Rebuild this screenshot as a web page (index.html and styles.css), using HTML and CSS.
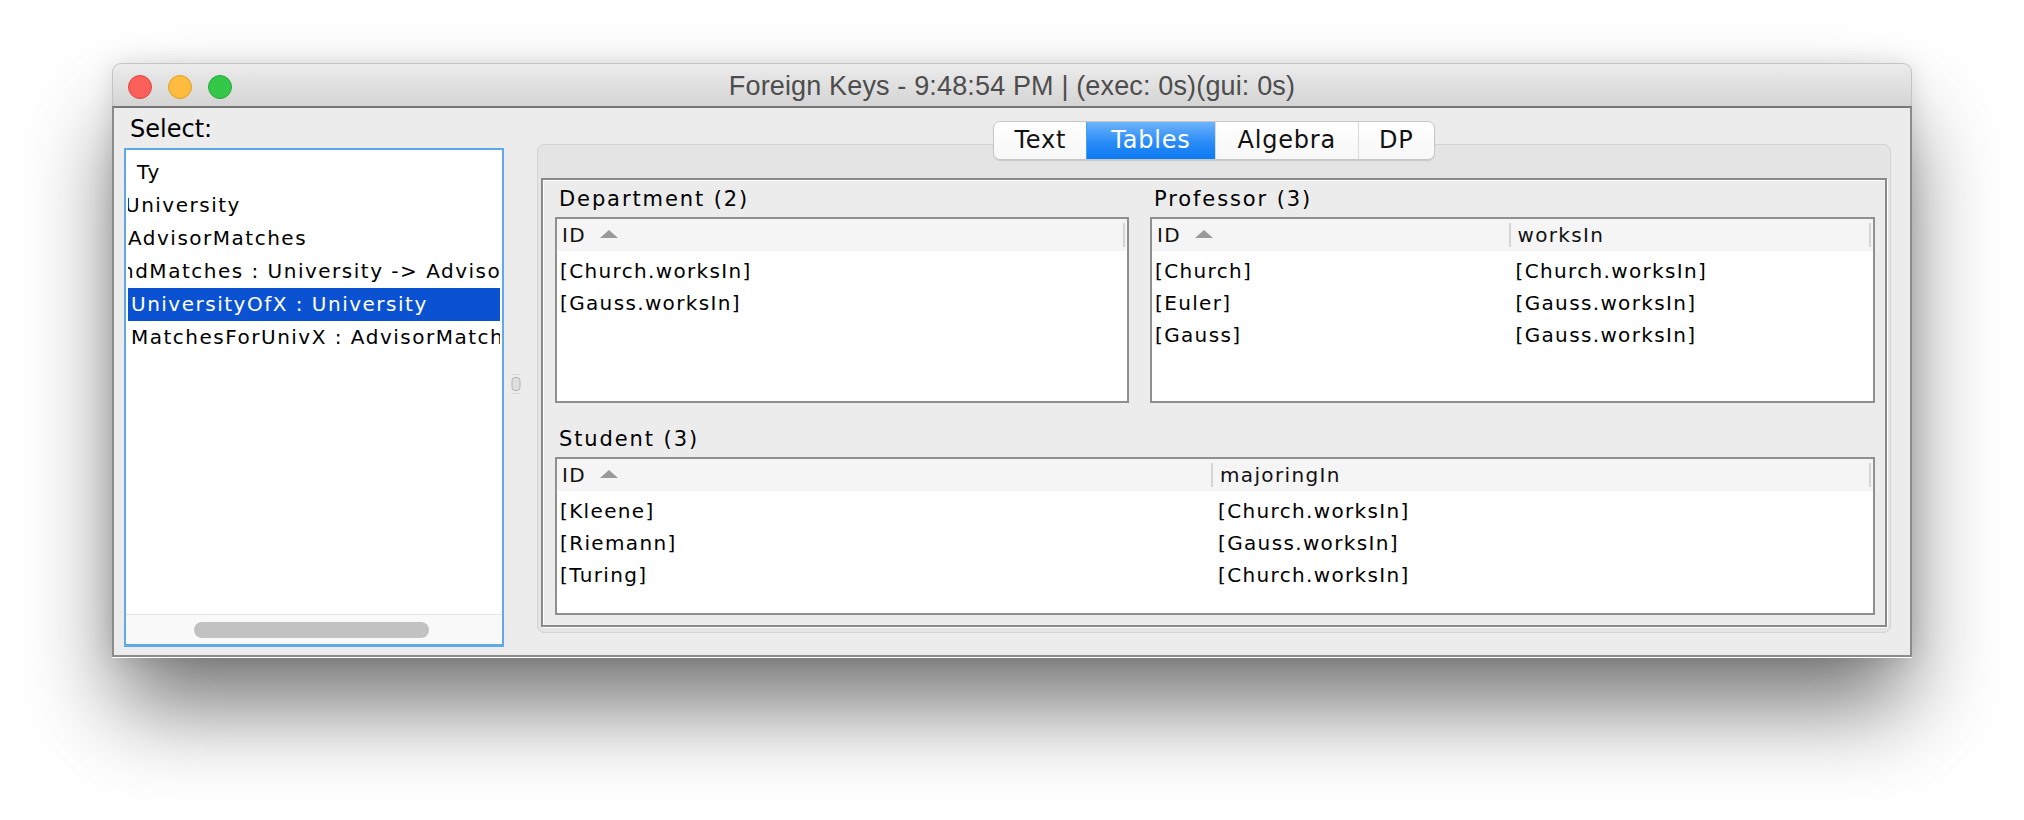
FILE: index.html
```html
<!DOCTYPE html>
<html>
<head>
<meta charset="utf-8">
<title>Foreign Keys</title>
<link rel="stylesheet" href="styles.css">
</head>
<body>
<div class="window">
  <div class="titlebar">
    <div class="lights">
      <span class="light red"></span>
      <span class="light yellow"></span>
      <span class="light green"></span>
    </div>
    <div class="title">Foreign Keys - 9:48:54 PM | (exec: 0s)(gui: 0s)</div>
    <div class="lights-spacer"></div>
  </div>
  <div class="content">
    <div class="left">
      <div class="select-label">Select:</div>
      <div class="listbox">
        <div class="list-rows">
          <div class="item ind-ty">Ty</div>
          <div class="item ind-u">University</div>
          <div class="item ind-a">AdvisorMatches</div>
          <div class="item ind-clip">ndMatches : University -&gt; AdvisorMatches</div>
          <div class="item ind-s selected">UniversityOfX : University</div>
          <div class="item ind-s">MatchesForUnivX : AdvisorMatches</div>
        </div>
        <div class="hscroll"><div class="hthumb"></div></div>
      </div>
    </div>
    <div class="divider">
      <svg class="grip" width="10" height="22" viewBox="0 0 10 22">
        <line x1="1" y1="1.5" x2="9" y2="1.5" stroke="#d6d6d6" stroke-width="1"/>
        <rect x="1" y="4.5" width="8" height="13" rx="3" fill="#dedede" stroke="#b4b4b4" stroke-width="1"/>
        <line x1="1" y1="20.5" x2="9" y2="20.5" stroke="#d6d6d6" stroke-width="1"/>
      </svg>
    </div>
    <div class="right">
      <div class="tabs">
        <div class="tab">Text</div>
        <div class="tab active">Tables</div>
        <div class="tab">Algebra</div>
        <div class="tab">DP</div>
      </div>
      <div class="tabpanel">
        <div class="inner">
          <div class="toprow">
            <section class="tsec">
              <div class="ttitle">Department (2)</div>
              <div class="table short">
                <div class="thead cols1">
                  <div class="th">ID<span class="sort"></span></div>
                </div>
                <div class="tbody">
                  <div class="tr cols1"><div class="td">[Church.worksIn]</div></div>
                  <div class="tr cols1"><div class="td">[Gauss.worksIn]</div></div>
                </div>
              </div>
            </section>
            <section class="tsec">
              <div class="ttitle">Professor (3)</div>
              <div class="table short">
                <div class="thead cols2">
                  <div class="th">ID<span class="sort"></span></div>
                  <div class="th">worksIn</div>
                </div>
                <div class="tbody">
                  <div class="tr cols2"><div class="td">[Church]</div><div class="td">[Church.worksIn]</div></div>
                  <div class="tr cols2"><div class="td">[Euler]</div><div class="td">[Gauss.worksIn]</div></div>
                  <div class="tr cols2"><div class="td">[Gauss]</div><div class="td">[Gauss.worksIn]</div></div>
                </div>
              </div>
            </section>
          </div>
          <section class="tsec student">
            <div class="ttitle">Student (3)</div>
            <div class="table tall">
              <div class="thead cols2">
                <div class="th">ID<span class="sort"></span></div>
                <div class="th">majoringIn</div>
              </div>
              <div class="tbody">
                <div class="tr cols2"><div class="td">[Kleene]</div><div class="td">[Church.worksIn]</div></div>
                <div class="tr cols2"><div class="td">[Riemann]</div><div class="td">[Gauss.worksIn]</div></div>
                <div class="tr cols2"><div class="td">[Turing]</div><div class="td">[Church.worksIn]</div></div>
              </div>
            </div>
          </section>
        </div>
      </div>
    </div>
  </div>
</div>
</body>
</html>
```

FILE: styles.css
```css
html, body {
  margin: 0;
  padding: 0;
}

body {
  width: 2024px;
  height: 820px;
  overflow: hidden;
  background: #ffffff;
  font-family: "DejaVu Sans", "Liberation Sans", sans-serif;
  color: #000;
}

.window {
  width: 1800px;
  margin: 63px 0 0 112px;
  border-radius: 9px 9px 0 0;
  box-shadow: 0 55px 90px -6px rgba(0, 0, 0, 0.55), 0 0 24px rgba(0, 0, 0, 0.12);
}

/* ---------- title bar ---------- */
.titlebar {
  box-sizing: border-box;
  height: 43px;
  padding-top: 3px;
  display: flex;
  align-items: center;
  border: 1px solid #c4c4c4;
  border-bottom: none;
  border-radius: 9px 9px 0 0;
  background: linear-gradient(#ececec, #d4d4d4);
}

.lights {
  width: 120px;
  box-sizing: border-box;
  padding-left: 15px;
  display: flex;
  gap: 16px;
}

.lights-spacer {
  width: 120px;
}

.light {
  box-sizing: border-box;
  width: 24px;
  height: 24px;
  border-radius: 50%;
}

.light.red { background: #fc605b; border: 1px solid #de4842; }
.light.yellow { background: #fdbc40; border: 1px solid #dea123; }
.light.green { background: #34c84a; border: 1px solid #27aa35; }

.title {
  flex: 1;
  text-align: center;
  font-family: "Liberation Sans", Arial, sans-serif;
  font-size: 27px;
  letter-spacing: 0.15px;
  color: #4d4d4d;
  white-space: nowrap;
}

/* ---------- content ---------- */
.content {
  display: flex;
  height: 547px;
  background: #ececec;
  border: 2px solid #8c8c8c;
  border-top-color: #777;
  box-shadow: 0 1px 0 #fff;
}

.left {
  display: flex;
  flex-direction: column;
  padding: 7px 0 8px 10px;
  width: 380px;
}

.select-label {
  font-size: 24px;
  line-height: 28px;
  height: 28px;
  padding-left: 6px;
  margin-bottom: 5px;
}

.listbox {
  flex: 1;
  display: flex;
  flex-direction: column;
  box-sizing: border-box;
  border: 2px solid #5fa9eb;
  border-bottom-width: 3px;
  background: #fff;
  overflow: hidden;
}

.list-rows {
  flex: 1;
  padding-top: 6px;
  overflow: hidden;
}

.item {
  margin: 0 2px;
  height: 33px;
  line-height: 33px;
  font-size: 20px;
  letter-spacing: 1.5px;
  white-space: nowrap;
  overflow: hidden;
}

.item.selected {
  background: #0b52d2;
  color: #fff;
}

.ind-ty { padding-left: 9px; }
.ind-u { text-indent: -3px; }
.ind-a { text-indent: 0; }
.ind-clip { text-indent: -7px; }
.ind-s { padding-left: 3px; }

.hscroll {
  height: 30px;
  border-top: 1px solid #e3e3e3;
  background: #f9f9f9;
  padding: 7px 0 0 68px;
  box-sizing: border-box;
}

.hthumb {
  width: 235px;
  height: 16px;
  border-radius: 8px;
  background: #c2c2c2;
}

.divider {
  width: 33px;
  display: flex;
  align-items: center;
  padding-top: 5px;
  box-sizing: border-box;
}

.grip {
  display: block;
  margin-left: 7px;
}

/* ---------- right side ---------- */
.right {
  width: 1354px;
  display: flex;
  flex-direction: column;
  padding: 13px 0 22px 0;
  box-sizing: border-box;
  height: 547px;
}

.tabs {
  align-self: center;
  display: flex;
  height: 39px;
  box-sizing: border-box;
  border: 1px solid #c6c6c6;
  border-radius: 7px;
  background: linear-gradient(#ffffff, #f7f7f7);
  box-shadow: 0 1px 1px rgba(0, 0, 0, 0.12);
  overflow: hidden;
  margin-bottom: -16px;
  position: relative;
  z-index: 1;
}

.tab {
  padding: 0 22px;
  line-height: 37px;
  font-size: 24px;
  letter-spacing: 0.8px;
  color: #111;
  border-left: 1px solid #dadada;
}

.tab:first-child {
  border-left: none;
  padding: 0 20px;
}

.tab:last-child {
  padding: 0 20px;
}

.tab.active {
  background: linear-gradient(#6db4fb, #2a8bf7 55%, #0c7af2);
  color: #fff;
  border-left-color: #4a9ff5;
  padding: 0 24px;
}

.tabpanel {
  flex: 1;
  box-sizing: border-box;
  border: 1px solid #d3d3d3;
  border-radius: 7px;
  background: #e4e4e4;
  padding: 33px 3px 5px 3px;
  display: flex;
}

.inner {
  flex: 1;
  box-sizing: border-box;
  border: 2px solid #8a8a8a;
  background: #ececec;
  box-shadow: inset 1px 1px 0 #fff, 1px 1px 0 #fff;
  padding: 7px 10px 10px 12px;
}

.toprow {
  display: grid;
  grid-template-columns: 574px 1fr;
  column-gap: 21px;
}

.student {
  margin-top: 24px;
}

.ttitle {
  font-size: 21px;
  line-height: 24px;
  letter-spacing: 1.9px;
  padding-left: 4px;
  margin-bottom: 6px;
  white-space: nowrap;
}

.table {
  box-sizing: border-box;
  border: 2px solid #8f8f8f;
  background: #fff;
  font-size: 20px;
  letter-spacing: 1.35px;
  overflow: hidden;
}

.table.short { height: 186px; }
.table.tall { height: 158px; }

.cols1 { display: grid; grid-template-columns: 1fr; }
.cols2 { display: grid; grid-template-columns: 1fr 1fr; }

.thead {
  height: 32px;
  background: #f5f5f5;
}

.th {
  line-height: 32px;
  padding-left: 5px;
  white-space: nowrap;
  color: #111;
  background: linear-gradient(#d4d4d4, #d4d4d4) right 2px center / 2px 24px no-repeat;
}

.sort {
  display: inline-block;
  width: 0;
  height: 0;
  margin-left: 14px;
  border-left: 9px solid transparent;
  border-right: 9px solid transparent;
  border-bottom: 8px solid #9a9a9a;
  vertical-align: 4px;
}

.tbody {
  padding-top: 4px;
}

.tr {
  height: 32px;
}

.td {
  line-height: 32px;
  padding-left: 3px;
  white-space: nowrap;
}
```
